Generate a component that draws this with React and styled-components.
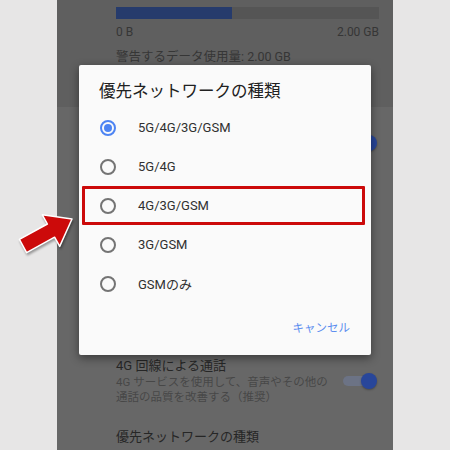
import React from 'react'
import styled, { createGlobalStyle } from 'styled-components'

const GlobalStyle = createGlobalStyle`
  html, body { margin: 0; padding: 0; background: #e7e6e6; }
  body { font-family: Roboto, "Noto Sans CJK JP", sans-serif; }
`;

const Page = styled.div`
  position: relative;
  width: 450px;
  height: 450px;
  overflow: hidden;
  background: #e7e6e6;
`;

const Screen = styled.div`
  position: relative;
  width: 336px;
  height: 450px;
  margin: 0 auto;
  background: #676767;
  display: flex;
  flex-direction: column;
  overflow: hidden;
`;

const UsageCard = styled.div`
  flex-shrink: 0;
  height: 107px;
  box-sizing: border-box;
  padding: 7px 14px 0 59px;
  background: #5f5f5f;
`;

const Bar = styled.div`
  height: 12px;
  background: #555555;
  display: flex;
`;

const BarFill = styled.div`
  background: #263b6c;
`;

const Labels = styled.div`
  display: flex;
  justify-content: space-between;
  margin-top: 6px;
  font-size: 12px;
  line-height: 14px;
  color: #363636;
`;

const Warning = styled.div`
  margin-top: 10px;
  font-size: 12.5px;
  line-height: 16px;
  color: #363636;
`;

const SettingRow = styled.div`
  flex-shrink: 0;
  display: flex;
  align-items: ${p => p.$align || 'center'};
  box-sizing: border-box;
  height: ${p => p.$h}px;
  padding: ${p => p.$top || 0}px 16px 0 59px;
`;

const RowText = styled.div`
  flex: 1;
`;

const RowTitle = styled.div`
  font-size: 13px;
  line-height: 18px;
  color: #262626;
`;

const RowSub = styled.div`
  font-size: 11.5px;
  line-height: 15px;
  color: #474747;
`;

const Toggle = styled.div`
  position: relative;
  width: 34px;
  height: 16px;
  display: flex;
  align-items: center;
  justify-content: flex-end;
  &::before {
    content: '';
    position: absolute;
    left: 0;
    right: 2px;
    height: 10px;
    border-radius: 5px;
    background: #6c7385;
  }
`;

const Thumb = styled.div`
  position: relative;
  width: 16px;
  height: 16px;
  border-radius: 50%;
  background: #28469a;
  box-shadow: 0 1px 2px rgba(0, 0, 0, 0.3);
`;

const Dialog = styled.div`
  position: absolute;
  left: 22px;
  top: 65px;
  width: 292px;
  height: 290px;
  box-sizing: border-box;
  background: #fafafa;
  border-radius: 2px;
  box-shadow: 0 3px 10px rgba(0, 0, 0, 0.45);
  display: flex;
  flex-direction: column;
`;

const DialogTitle = styled.div`
  padding: 16px 20px 0;
  font-size: 16.5px;
  line-height: 22px;
  color: #212121;
`;

const Options = styled.div`
  margin-top: 5px;
  display: flex;
  flex-direction: column;
`;

const Option = styled.div`
  display: flex;
  align-items: center;
  gap: 22px;
  height: 39px;
  box-sizing: border-box;
  margin: 0 6px 0 3px;
  padding-left: 15px;
  border: 3px solid ${p => (p.$marked ? '#cc0a0a' : 'transparent')};
  border-radius: 1px;
  font-size: 13px;
  color: #303030;
`;

const Radio = styled.span`
  position: relative;
  width: 16px;
  height: 16px;
  box-sizing: border-box;
  border-radius: 50%;
  border: 2px solid ${p => (p.$on ? '#4d84f3' : '#747474')};
  &::after {
    content: '';
    display: ${p => (p.$on ? 'block' : 'none')};
    position: absolute;
    left: 2px;
    top: 2px;
    width: 8px;
    height: 8px;
    border-radius: 50%;
    background: #4d84f3;
  }
`;

const Actions = styled.div`
  display: flex;
  justify-content: flex-end;
  padding: 15px 21px 0;
`;

const CancelButton = styled.button`
  border: none;
  background: none;
  padding: 0;
  font-family: inherit;
  font-size: 11.5px;
  line-height: 20px;
  color: #5b8def;
`;

const Arrow = styled.svg`
  position: absolute;
  left: 10px;
  top: 205px;
  filter: drop-shadow(1px 2px 1px rgba(0, 0, 0, 0.35));
`;

const options = ['5G/4G/3G/GSM', '5G/4G', '4G/3G/GSM', '3G/GSM', 'GSMのみ'];

export default function App() {
  return <Page>
    <GlobalStyle />
    <Screen>
      <UsageCard>
        <Bar><BarFill style={{ width: '44%' }} /></Bar>
        <Labels><span>0 B</span><span>2.00 GB</span></Labels>
        <Warning>警告するデータ使用量: 2.00 GB</Warning>
      </UsageCard>
      <SettingRow $h={72}>
        <RowText />
        <Toggle><Thumb /></Toggle>
      </SettingRow>
      <SettingRow $h={161} />
      <SettingRow $h={81}>
        <RowText>
          <RowTitle>4G 回線による通話</RowTitle>
          <RowSub>4G サービスを使用して、音声やその他の<br />通話の品質を改善する（推奨）</RowSub>
        </RowText>
        <Toggle><Thumb /></Toggle>
      </SettingRow>
      <SettingRow $h={60} $top={7} $align="flex-start">
        <RowText>
          <RowTitle>優先ネットワークの種類</RowTitle>
        </RowText>
      </SettingRow>

      <Dialog>
        <DialogTitle>優先ネットワークの種類</DialogTitle>
        <Options>
          {options.map((o, i) => (
            <Option key={o} $marked={i === 2}>
              <Radio $on={i === 0} />
              <span>{o}</span>
            </Option>
          ))}
        </Options>
        <Actions>
          <CancelButton>キャンセル</CancelButton>
        </Actions>
      </Dialog>
    </Screen>
    <Arrow width="80" height="60" viewBox="0 0 80 60">
      <polygon
        points="9.4,34.4 37.4,19 32.3,9.8 62,14 49.7,41.4 44.6,32.2 16.6,47.6"
        fill="#cc0a0a"
        stroke="#ffffff"
        strokeWidth="1.5"
        strokeLinejoin="round"
      />
    </Arrow>
  </Page>
}
